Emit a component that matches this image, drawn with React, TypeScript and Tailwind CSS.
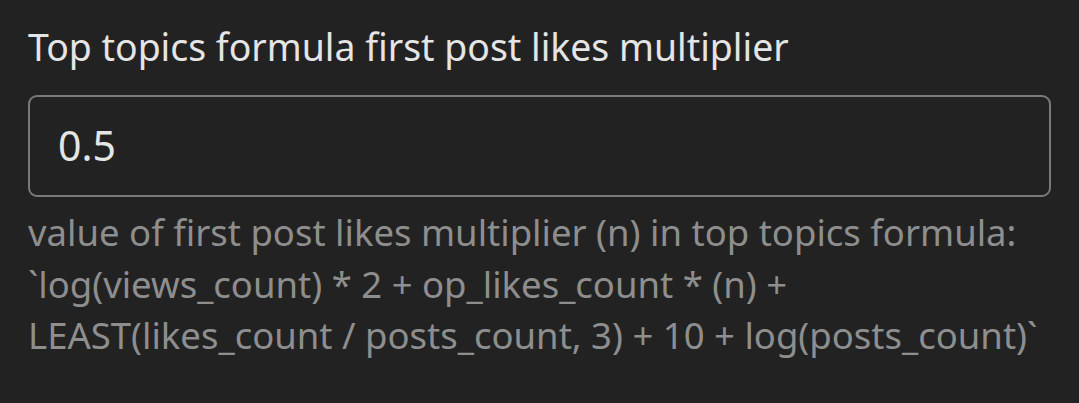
export default function App() {
  return (
    <div className="h-[403px] w-[1079px] bg-[#222222] pl-[28px] pr-[28px] pt-[22px] font-['Noto_Sans',sans-serif]">
      <label className="block text-[37.4px] leading-[50px] text-[#e5e5e5]">
        Top topics formula first post likes multiplier
      </label>
      <div className="mt-[23px] flex h-[102px] items-center rounded-[9px] border-2 border-[#7a7a7a] pl-[28px] text-[41px] text-[#e5e5e5]">
        0.5
      </div>
      <p className="mt-[10px] text-[36.5px] leading-[51.5px] text-[#8e8e8e]">
        value of first post likes multiplier (n) in top topics formula: `log(views_count) * 2 +
        op_likes_count * (n) + LEAST(likes_count / posts_count, 3) + 10 + log(posts_count)`
      </p>
    </div>
  );
}
